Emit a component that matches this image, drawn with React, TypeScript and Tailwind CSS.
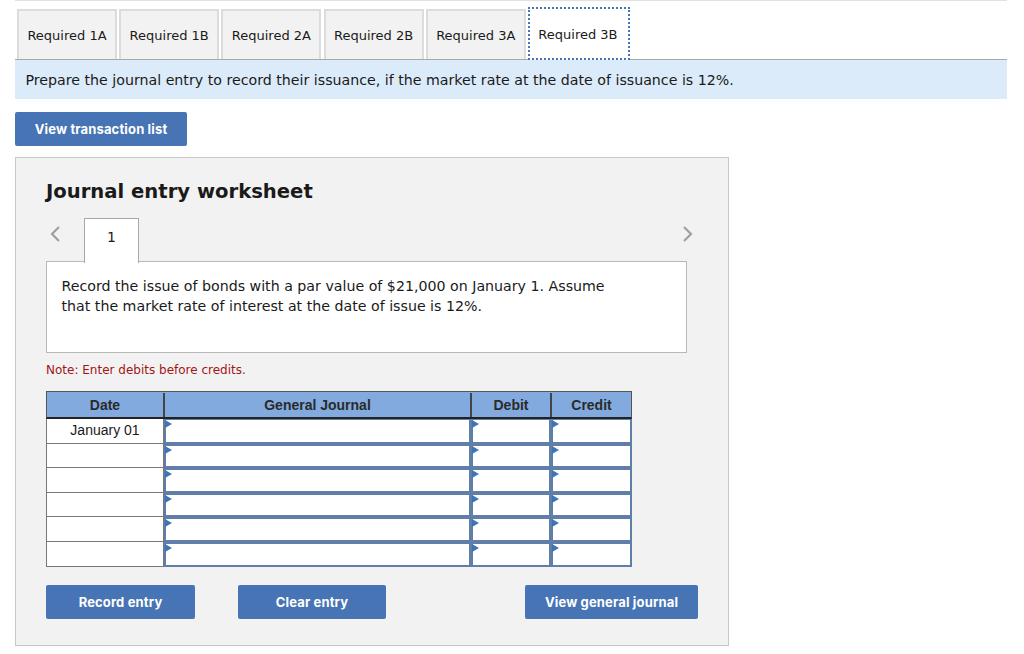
const tabs = ["Required 1A", "Required 1B", "Required 2A", "Required 2B", "Required 3A"];
const rows = ["January 01", "", "", "", "", ""];

function Cell({ thick }: { thick: boolean }) {
  return (
    <div className={`relative h-full border-x-2 border-b-2 border-[#5f7fa8] bg-white ${thick ? "border-t-2" : "border-t"}`}>
      <span className="absolute left-[-1px] top-0 h-0 w-0 border-y-[4px] border-l-[7px] border-y-transparent border-l-[#3f74bb]" />
    </div>
  );
}

function ActionButton({ label, width }: { label: string; width: string }) {
  return (
    <button className={`h-[34px] rounded-[2px] bg-[#4674b4] pt-[2px] font-['Inter',sans-serif] text-[13px] font-bold tracking-[0.15px] text-white ${width}`}>
      {label}
    </button>
  );
}

export default function App() {
  return (
    <div className="h-[654px] w-[1024px] overflow-hidden bg-white pl-[15px] font-['DejaVu_Sans',Verdana,sans-serif] text-[#1a1a1a]">
      <div className="w-[992px]">
        <div className="h-px bg-[#e2e2e2]" />

        {/* Tabs */}
        <div className="flex h-[59px] items-end gap-[2.2px] border-b border-[#a8a8a8] pl-[2px]">
          {tabs.map((t) => (
            <div key={t} className="flex h-[50px] w-[100px] items-center justify-center border-2 border-b-0 border-[#dcdcdc] bg-[#f2f2f2] pt-px text-[13px]">
              {t}
            </div>
          ))}
          <div className="relative top-px flex h-[53px] w-[102px] items-center justify-center border-2 border-dotted border-[#4674b4] bg-white pr-[2px] pt-[3px] text-[13px]">
            Required 3B
          </div>
        </div>

        <div className="flex h-[39px] items-center bg-[#dcebf9] pl-[10.5px] pt-[2px] text-[14.2px]">
          Prepare the journal entry to record their issuance, if the market rate at the date of issuance is 12%.
        </div>

        <button className="mt-[13px] block h-[34px] w-[172px] rounded-[2px] bg-[#4674b4] pt-[2px] font-['Inter',sans-serif] text-[13px] font-bold tracking-[0.15px] text-white">
          View transaction list
        </button>

        {/* Worksheet */}
        <div className="mt-[11px] h-[489px] w-[714px] border border-[#c8c8c8] bg-[#f2f2f2] pl-[30px] pt-[20px]">
          <h2 className="text-[19.6px] font-bold leading-[28px] text-[#1a1a1a]">Journal entry worksheet</h2>

          <div className="relative mt-[12px] h-[43px] w-[641px]">
            <svg className="absolute left-[3px] top-[7px]" width="12" height="18" viewBox="0 0 12 18" fill="none">
              <path d="M10 2 3 9l7 7" stroke="#a0a0a0" strokeWidth="2.2" />
            </svg>
            <svg className="absolute right-[-7px] top-[7px]" width="12" height="18" viewBox="0 0 12 18" fill="none">
              <path d="m2 2 7 7-7 7" stroke="#a0a0a0" strokeWidth="2.2" />
            </svg>
            <div className="absolute left-[38px] top-0 z-10 flex h-[45px] w-[55px] items-center justify-center border border-b-0 border-[#a8a8a8] bg-white pb-[7px] text-[14px]">
              1
            </div>
          </div>

          <div className="h-[92px] w-[641px] border border-[#b8b8b8] bg-white pl-[14.5px] pr-[70px] pt-[15px] text-[14.2px] leading-[19.5px]">
            Record the issue of bonds with a par value of $21,000 on January 1. Assume that the market rate of interest at the date of issue is 12%.
          </div>

          <p className="mt-[9px] text-[12px] leading-[16px] text-[#a31515]">Note: Enter debits before credits.</p>

          {/* Table */}
          <div className="mt-[13px] w-[586px] font-['Liberation_Sans',Arial,sans-serif] text-[14px]">
            <div className="grid h-[28px] grid-cols-[116px_307px_80px_81px] border border-[#555] border-b-2 border-b-[#222] bg-[#82aade] pt-px font-bold text-[#2a2a2a]">
              <div className="flex items-center justify-center">Date</div>
              <div className="flex items-center justify-center border-l-2 border-[#444]">General Journal</div>
              <div className="flex items-center justify-center border-l-2 border-[#444]">Debit</div>
              <div className="flex items-center justify-center border-l-2 border-[#444]">Credit</div>
            </div>
            {rows.map((date, i) => (
              <div key={i} className="grid h-[24.6px] grid-cols-[118px_307px_80px_81px]">
                <div className="flex items-center justify-center border-x border-b border-[#777] bg-white">{date}</div>
                <Cell thick={i > 0} />
                <Cell thick={i > 0} />
                <Cell thick={i > 0} />
              </div>
            ))}
          </div>

          <div className="mt-[18px] flex w-[652px] justify-between">
            <ActionButton label="Record entry" width="w-[149px]" />
            <div className="ml-[-96px]">
              <ActionButton label="Clear entry" width="w-[148px]" />
            </div>
            <ActionButton label="View general journal" width="w-[173px]" />
          </div>
        </div>
      </div>
    </div>
  );
}
